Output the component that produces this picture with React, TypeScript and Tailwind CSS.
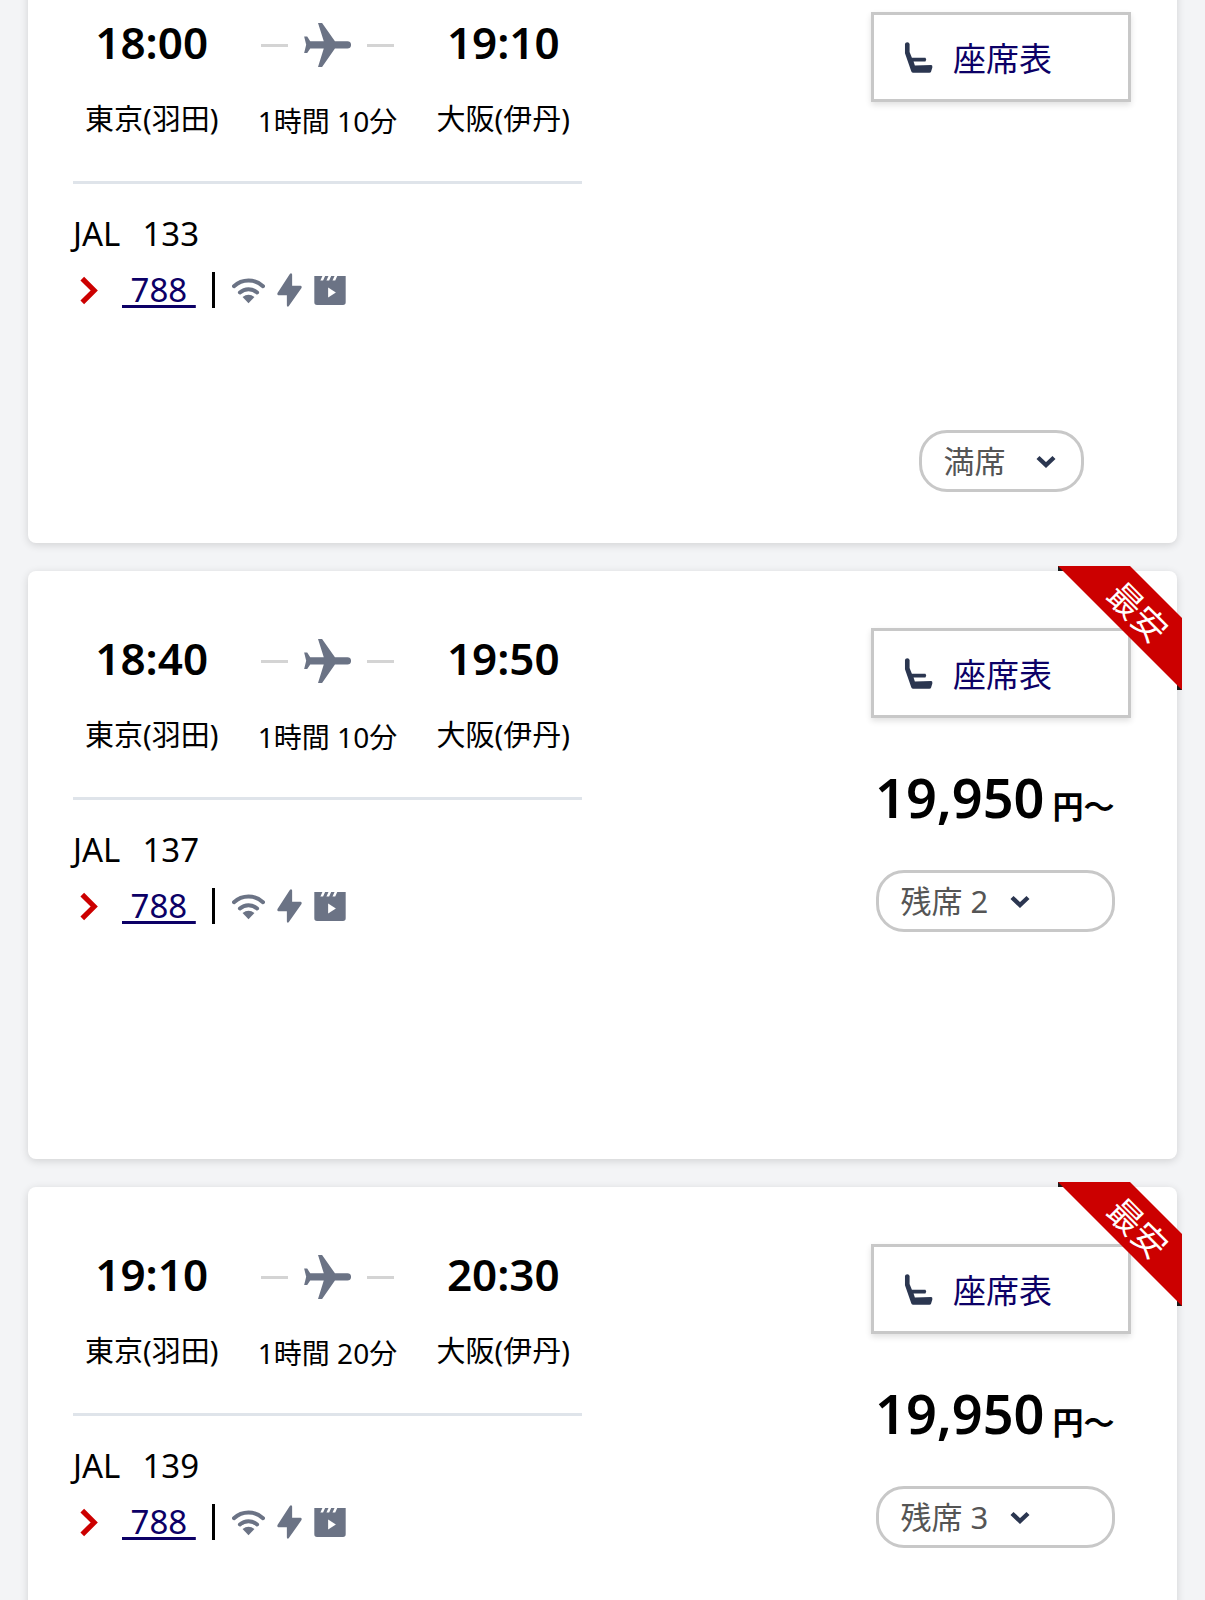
import { clsx } from "clsx";

type Flight = {
  number: string;
  departure: string;
  arrival: string;
  duration: string;
  aircraft: string;
  price: string | null;
  seats: string;
};

const FLIGHTS: Flight[] = [
  { number: "133", departure: "18:00", arrival: "19:10", duration: "1時間 10分", aircraft: "788", price: null, seats: "満席" },
  { number: "137", departure: "18:40", arrival: "19:50", duration: "1時間 10分", aircraft: "788", price: "19,950", seats: "残席 2" },
  { number: "139", departure: "19:10", arrival: "20:30", duration: "1時間 20分", aircraft: "788", price: "19,950", seats: "残席 3" },
];

function PlaneIcon() {
  return (
    <svg viewBox="0 0 138 130" className="h-[44px] w-[47px]" fill="#6b7385" aria-hidden="true">
      <path d="M41 0H53L91 54H128a10 10 0 0 1 0 21H91L53 130H41L58 75H18L9 89H0L6 64 0 40H9L18 54H58Z" />
    </svg>
  );
}

function WifiIcon() {
  return (
    <svg viewBox="0 0 100 80" className="h-[27px] w-[33px]" fill="none" aria-label="Wi-Fi" role="img">
      <path d="M6 27A64 64 0 0 1 94 27M24 46A39 39 0 0 1 76 46" stroke="#6b7385" strokeWidth="12" strokeLinecap="round" />
      <path d="M32 60Q50 46 68 60L50 79Z" fill="#6b7385" />
    </svg>
  );
}

function PowerIcon() {
  return (
    <svg viewBox="0 0 76 102" className="h-[34px] w-[25px]" fill="#6b7385" aria-label="電源" role="img">
      <path d="M39 2Q44 -2 46 4V38H72Q77 40 74 46L36 100Q32 104 30 98V67H4Q-1 65 2 59Z" />
    </svg>
  );
}

function VideoIcon() {
  return (
    <svg viewBox="0 0 93 86" className="h-[29px] w-[32px]" aria-label="ビデオ" role="img">
      <path d="M0 0H24L18 13H26L32 0H42L36 13H44L50 0H60L54 13H62L68 0H93V78Q93 86 85 86H8Q0 86 0 78Z" fill="#6b7385" />
      <path d="M41 34L64 49 41 64Z" fill="white" />
    </svg>
  );
}

function SeatIcon() {
  return (
    <svg viewBox="0 0 86 94" className="h-[31px] w-[29px]" fill="#2b3650" aria-hidden="true">
      <path d="M2 6Q3 1 9 1 15 1 16 6V30L23 48H64Q69 53 64 59H28L32 71 82 70Q86 71 85 77L81 90Q80 93 76 93H26Q22 93 21 89L2 34Z" />
    </svg>
  );
}

function ChevronDown() {
  return (
    <svg viewBox="0 0 20 13" className="h-[13px] w-[20px]" fill="none" aria-hidden="true">
      <path d="M2 2.5L10 10L18 2.5" stroke="#2b3650" strokeWidth="4.4" />
    </svg>
  );
}

function CheapestRibbon() {
  return (
    <div className="absolute -top-[5px] -right-[5px] size-[124px]">
      <svg viewBox="0 0 124 124" className="size-full" aria-hidden="true">
        <path d="M0 0H6V5H0ZM119 118H124V124H119Z" fill="#1a1a1a" />
        <path d="M0 0H72L124 52V124Z" fill="#c00" />
      </svg>
      <span className="absolute top-[46px] left-[80px] -translate-x-1/2 -translate-y-1/2 rotate-45 text-[34px] leading-none whitespace-nowrap text-white">
        最安
      </span>
    </div>
  );
}

function Endpoint({ time, airport }: { time: string; airport: string }) {
  return (
    <div className="flex flex-col items-center">
      <p className="text-[44px] leading-[60px] font-semibold">{time}</p>
      <p className="mt-[27px] text-[29px] leading-[40px]">{airport}</p>
    </div>
  );
}

function FlightCard({ flight }: { flight: Flight }) {
  const { price } = flight;

  return (
    <article className="relative flex h-[588px] justify-between rounded-lg bg-white pt-[57px] pr-[46px] pl-[45px] shadow-[0_2px_8px_rgba(0,0,0,0.14)]">
      <div className="w-[509px]">
        <div className="flex justify-between border-b-3 border-[#dfe4ea] px-3 pb-10">
          <Endpoint time={flight.departure} airport="東京(羽田)" />
          <div className="flex flex-col items-center">
            <div className="flex h-[66px] items-center gap-4">
              <span className="h-[3px] w-[27px] bg-[#d4d4d4]" />
              <PlaneIcon />
              <span className="h-[3px] w-[27px] bg-[#d4d4d4]" />
            </div>
            <p className="mt-[23px] text-[28px] leading-[40px]">{flight.duration}</p>
          </div>
          <Endpoint time={flight.arrival} airport="大阪(伊丹)" />
        </div>

        <p className="mt-[26px] flex gap-[22px] text-[33px] leading-[48px]">
          <span>JAL</span>
          <span>{flight.number}</span>
        </p>
        <div className="mt-2 flex h-[48px] items-center">
          <svg viewBox="0 0 17 28" className="ml-[7px] h-[29px] w-[18px]" fill="none" aria-hidden="true">
            <path d="M2 2.5L13.5 14L2 25.5" stroke="#c00" strokeWidth="5" />
          </svg>
          <a
            href="#aircraft"
            className="ml-6 text-[33px] leading-[48px] whitespace-pre text-[#0c0066] underline decoration-3 underline-offset-[3px]"
          >
            {` ${flight.aircraft} `}
          </a>
          <span className="ml-4 h-[36px] w-[3px] bg-black" />
          <div className="ml-[17px] flex items-center gap-3">
            <WifiIcon />
            <PowerIcon />
            <VideoIcon />
          </div>
        </div>
      </div>

      <div className="flex w-[260px] flex-col items-center">
        <button
          type="button"
          className="flex h-[90px] w-full items-center gap-5 border-3 border-[#c8c8c8] bg-white pl-[30px] text-[33px] text-[#0c0066] shadow-[0_3px_6px_rgba(0,0,0,0.12)]"
        >
          <SeatIcon />
          <span className="pt-1">座席表</span>
        </button>
        {price && (
          <p className="mt-[39px] flex h-[80px] items-baseline gap-2 self-start pl-1 text-[54px] leading-[80px] font-semibold whitespace-nowrap">
            {price}
            <span className="text-[31px]">円〜</span>
          </p>
        )}
        <button
          type="button"
          aria-expanded={false}
          className={clsx(
            "flex h-[62px] items-center rounded-[28px] border-3 border-[#c8c8c8] bg-white pl-[22px] text-[31px] text-[#555555]",
            price ? "mt-[33px] mr-3 w-[239px] gap-[22px]" : "mt-[328px] w-[165px] gap-[30px]"
          )}
        >
          {flight.seats}
          <ChevronDown />
        </button>
      </div>

      {price && <CheapestRibbon />}
    </article>
  );
}

export default function App() {
  return (
    <main className="h-screen overflow-hidden bg-[#f3f4f6] px-7 font-['Noto_Sans','Noto_Sans_CJK_JP',sans-serif] text-black">
      <div className="-mt-[45px] flex flex-col gap-7">
        {FLIGHTS.map((flight) => (
          <FlightCard key={flight.number} flight={flight} />
        ))}
      </div>
    </main>
  );
}
